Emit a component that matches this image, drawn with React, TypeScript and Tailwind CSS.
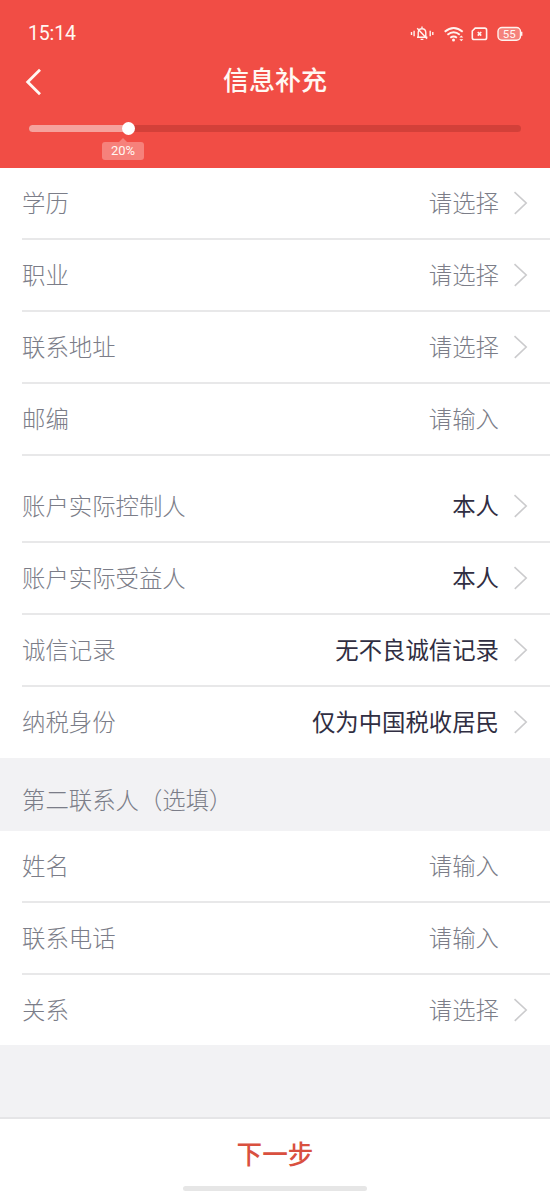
import React from "react";

type Row = { label: string; value: string; filled?: boolean; arrow?: boolean };

const basicRows: Row[] = [
  { label: "学历", value: "请选择", arrow: true },
  { label: "职业", value: "请选择", arrow: true },
  { label: "联系地址", value: "请选择", arrow: true },
  { label: "邮编", value: "请输入" },
];

const accountRows: Row[] = [
  { label: "账户实际控制人", value: "本人", filled: true, arrow: true },
  { label: "账户实际受益人", value: "本人", filled: true, arrow: true },
  { label: "诚信记录", value: "无不良诚信记录", filled: true, arrow: true },
  { label: "纳税身份", value: "仅为中国税收居民", filled: true, arrow: true },
];

const contactRows: Row[] = [
  { label: "姓名", value: "请输入" },
  { label: "联系电话", value: "请输入" },
  { label: "关系", value: "请选择", arrow: true },
];

function FormRow({ row, last }: { row: Row; last?: boolean }) {
  return (
    <div
      className={`ml-[22px] flex items-center pr-[22px] text-[23.4px] leading-[34px] ${
        last ? "h-[70.5px]" : "h-[72px] border-b-2 border-[#e8e8e9]"
      }`}
    >
      <span className="mb-[2px] font-light text-[#7b7d88]">{row.label}</span>
      <span className={`mb-[2px] ml-auto ${row.filled ? "text-[#302e42]" : "font-light text-[#7b7d88]"}`}>{row.value}</span>
      <span className="ml-[14px] flex w-[15px] shrink-0">
        {row.arrow && (
          <svg width="15" height="24" viewBox="0 0 15 24" fill="none" stroke="#cbcbcd" strokeWidth="1.6">
            <path d="M1.5 1.2 13.2 12 1.8 22.8" />
          </svg>
        )}
      </span>
    </div>
  );
}

function StatusIcons() {
  return (
    <svg width="114" height="20" viewBox="0 0 114 20" fill="none" stroke="#fff3ef" strokeWidth="1.4" className="ml-auto">
      <path d="M1.5 8v3M4.1 6.8v5.4M20.2 6.8v5.4M22.8 8v3" />
      <path d="M7 13.2h10.4M8.2 13V8.8c0-2.4 1.3-4.1 3.8-4.1s3.8 1.7 3.8 4.1V13M12 2.6v2M10.6 15.4h2.8M7.2 4.2l9.8 10.5" />
      <path d="M34.7 7.7q9-7.5 18 0M37.4 10.8q6.3-5 12.4 0M40.3 13.7q3.4-2.5 6.6 0" strokeWidth="1.9" />
      <circle cx="43.5" cy="16" r="1.5" fill="#fff3ef" stroke="none" />
      <path d="m49.3 13.6 2-2.1 2 2.1zM49.3 15.2h4l-2 2.1z" fill="#fff3ef" stroke="none" />
      <path d="M65.2 4.1h9.6q1.8 0 1.8 1.8v7.8q0 1.8-1.8 1.8H64.1q-1.8 0-1.8-1.8V7z" strokeWidth="1.6" />
      <path d="m67.8 8 3.4 3.6m0-3.6-3.4 3.6" strokeWidth="1.7" />
      <rect x="88" y="3.5" width="22.5" height="12.7" rx="4" fill="#f5827b" strokeWidth="1.4" />
      <path d="M111.6 7.8v4" strokeWidth="1.6" />
      <text x="99.2" y="13.9" textAnchor="middle" fill="#fff8f5" stroke="none" fontSize="11.5" fontFamily="Roboto, sans-serif">55</text>
    </svg>
  );
}

export default function App() {
  return (
    <div className="flex h-[1192px] w-[550px] flex-col overflow-hidden bg-white font-['Noto_Sans_CJK_SC',sans-serif]">
      <header className="flex h-[168px] shrink-0 flex-col bg-[#f14d45] text-[#fff8f3]">
        <div className="flex h-[48px] items-end pr-[26px] pb-[4px] pl-[28px]">
          <span className="font-[Roboto,sans-serif] text-[19.5px] leading-[20px] tracking-[-0.15px]">15:14</span>
          <StatusIcons />
        </div>
        <div className="grid h-[64px] grid-cols-[60px_1fr_60px] items-center">
          <svg width="18" height="28" viewBox="0 0 18 28" fill="none" stroke="currentColor" strokeWidth="2.8" className="mt-[3px] ml-[25px]">
            <path d="M15 1.8 2.7 14 15 26.2" />
          </svg>
          <h1 className="mb-[2px] text-center text-[26px] leading-[38px] font-medium">信息补充</h1>
        </div>
        <div className="mx-[29px] mt-[13px] flex h-[7px] rounded-full bg-[#d34039]">
          <div className="relative h-full w-[99px] rounded-l-full bg-[#f5a29d]">
            <div className="absolute -top-[3px] -right-[7px] size-[13px] rounded-full bg-white" />
            <div className="absolute top-[17px] left-[73px] flex h-[18px] w-[42px] items-center justify-center rounded-[3px] bg-[#f6817b] pb-[2px] font-[Roboto,sans-serif] text-[13px] leading-none">
              20%
              <svg width="10" height="5" viewBox="0 0 10 5" className="absolute -top-[4px] left-[16px]">
                <path d="M0 5 5 0l5 5z" fill="#f6817b" />
              </svg>
            </div>
          </div>
        </div>
      </header>

      <section className="flex shrink-0 flex-col">
        {basicRows.map((row) => (
          <FormRow key={row.label} row={row} />
        ))}
      </section>
      <section className="mt-[15px] flex shrink-0 flex-col">
        {accountRows.map((row, i) => (
          <FormRow key={row.label} row={row} last={i === 3} />
        ))}
      </section>

      <h2 className="flex h-[73px] shrink-0 items-center bg-[#f2f2f4] pt-[9px] pl-[22px] text-[23.4px] leading-[34px] font-light text-[#7b7d88]">
        第二联系人（选填）
      </h2>
      <section className="flex shrink-0 flex-col">
        {contactRows.map((row, i) => (
          <FormRow key={row.label} row={row} last={i === 2} />
        ))}
      </section>

      <div className="grow bg-[#f2f2f4]" />
      <footer className="flex h-[75px] shrink-0 flex-col items-center border-t-2 border-[#e5e5e7] bg-white">
        <button className="mt-[15px] text-[25.6px] leading-[38px] font-medium text-[#d9503f]">下一步</button>
        <div className="mt-[14px] h-[5px] w-[184px] rounded-full bg-[#e6e6e6]" />
      </footer>
    </div>
  );
}
